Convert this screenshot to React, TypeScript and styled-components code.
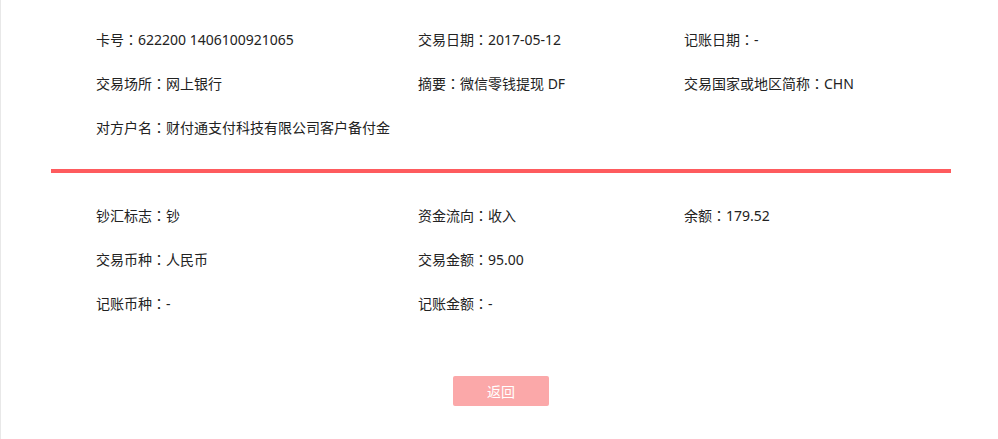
import React from "react";
import styled, { createGlobalStyle } from "styled-components";

const Global = createGlobalStyle`
  html, body { margin: 0; padding: 0; background: #fff; }
  body { font-family: "Noto Sans", "Noto Sans CJK SC", sans-serif; color: #222; }
`;

const Page = styled.div`
  min-height: 439px;
  box-sizing: border-box;
  border-left: 1px solid #e8e8e8;
  padding: 17px 0 0 50px;
`;

const Panel = styled.div`
  width: 900px;
  display: flex;
  flex-direction: column;
`;

const Section = styled.div`
  display: grid;
  grid-template-columns: 322px 266px 1fr;
  padding-left: 45px;
`;

const Item = styled.div<{ $span?: number }>`
  grid-column: span ${(p) => p.$span ?? 1};
  height: 44px;
  line-height: 44px;
  font-size: 14px;
  white-space: nowrap;
`;

const Colon = styled.span`
  font-family: "Noto Sans CJK JP", "Noto Sans CJK SC", sans-serif;
`;

const Divider = styled.div`
  height: 4px;
  background: #fe5b5e;
  margin: 20px 0 20px;
`;

const Actions = styled.div`
  display: flex;
  justify-content: center;
  margin-top: 51px;
`;

const BackButton = styled.button`
  width: 96px;
  height: 30px;
  border: none;
  border-radius: 2px;
  background: #fba8a9;
  color: #fff;
  font-family: "Noto Sans CJK SC", sans-serif;
  font-size: 14px;
  cursor: pointer;
  padding: 0;
`;

type Field = { label: string; value: string; span?: number } | null;

const top: Field[] = [
  { label: "卡号", value: "622200 1406100921065" },
  { label: "交易日期", value: "2017-05-12" },
  { label: "记账日期", value: "-" },
  { label: "交易场所", value: "网上银行" },
  { label: "摘要", value: "微信零钱提现 DF" },
  { label: "交易国家或地区简称", value: "CHN" },
  { label: "对方户名", value: "财付通支付科技有限公司客户备付金", span: 3 },
];

const bottom: Field[] = [
  { label: "钞汇标志", value: "钞" },
  { label: "资金流向", value: "收入" },
  { label: "余额", value: "179.52" },
  { label: "交易币种", value: "人民币" },
  { label: "交易金额", value: "95.00" },
  null,
  { label: "记账币种", value: "-" },
  { label: "记账金额", value: "-" },
  null,
];

const renderFields = (fields: Field[]) =>
  fields.map((f, i) =>
    f ? (
      <Item key={i} $span={f.span}>
        {f.label}
        <Colon>：</Colon>
        {f.value}
      </Item>
    ) : (
      <Item key={i} />
    )
  );

export default function App() {
  return (
    <>
      <Global />
      <Page>
        <Panel>
          <Section>{renderFields(top)}</Section>
          <Divider />
          <Section>{renderFields(bottom)}</Section>
          <Actions>
            <BackButton>返回</BackButton>
          </Actions>
        </Panel>
      </Page>
    </>
  );
}
